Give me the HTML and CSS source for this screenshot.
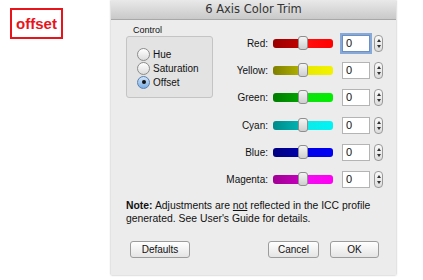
FILE: index.html
```html
<!DOCTYPE html>
<html lang="en">
<head>
    <meta charset="UTF-8">
    <title>6 Axis Color Trim</title>
    <link rel="stylesheet" href="styles.css">
</head>
<body>
    <div class="page">
        <div class="tag">offset</div>
        <div class="window">
            <div class="titlebar">6 Axis Color Trim</div>
            <div class="content">
                <div class="top">
                    <div class="control">
                        <div class="group-label">Control</div>
                        <div class="group-box">
                            <label class="radio"><span class="dot"></span>Hue</label>
                            <label class="radio"><span class="dot"></span>Saturation</label>
                            <label class="radio"><span class="dot on"></span>Offset</label>
                        </div>
                    </div>
                    <div class="rows">
                        <div class="row">
                            <span class="name">Red:</span>
                            <div class="track red"><span class="thumb"></span></div>
                            <div class="field focus">0</div>
                            <span class="stepper"><i class="up"></i><i class="down"></i></span>
                        </div>
                        <div class="row">
                            <span class="name">Yellow:</span>
                            <div class="track yellow"><span class="thumb"></span></div>
                            <div class="field">0</div>
                            <span class="stepper"><i class="up"></i><i class="down"></i></span>
                        </div>
                        <div class="row">
                            <span class="name">Green:</span>
                            <div class="track green"><span class="thumb"></span></div>
                            <div class="field">0</div>
                            <span class="stepper"><i class="up"></i><i class="down"></i></span>
                        </div>
                        <div class="row">
                            <span class="name">Cyan:</span>
                            <div class="track cyan"><span class="thumb"></span></div>
                            <div class="field">0</div>
                            <span class="stepper"><i class="up"></i><i class="down"></i></span>
                        </div>
                        <div class="row">
                            <span class="name">Blue:</span>
                            <div class="track blue"><span class="thumb"></span></div>
                            <div class="field">0</div>
                            <span class="stepper"><i class="up"></i><i class="down"></i></span>
                        </div>
                        <div class="row">
                            <span class="name">Magenta:</span>
                            <div class="track magenta"><span class="thumb"></span></div>
                            <div class="field">0</div>
                            <span class="stepper"><i class="up"></i><i class="down"></i></span>
                        </div>
                    </div>
                </div>
                <p class="note"><b>Note:</b> Adjustments are <u>not</u> reflected in the ICC profile<br>generated. See User's Guide for details.</p>
                <div class="buttons">
                    <button class="btn defaults">Defaults</button>
                    <button class="btn cancel">Cancel</button>
                    <button class="btn ok">OK</button>
                </div>
            </div>
        </div>
    </div>
</body>
</html>
```

FILE: styles.css
```css
body {
    margin: 0;
    background: #fff;
    font-family: "Liberation Sans", sans-serif;
    font-size: 10px;
    color: #111;
}
.page {
    display: flex;
    align-items: flex-start;
    padding: 8px 0 0 10px;
    height: 272px;
}
.tag {
    width: 49px;
    height: 27px;
    border: 2px solid #e8141c;
    color: #e8141c;
    font-weight: bold;
    font-size: 15px;
    display: flex;
    align-items: center;
    justify-content: center;
}
.window {
    margin: -8px 0 0 48px;
    width: 285px;
    height: 275px;
    background: #ececec;
    box-shadow: 0 0 2px rgba(0, 0, 0, 0.35);
    display: flex;
    flex-direction: column;
}
.titlebar {
    height: 19px;
    background: linear-gradient(#e9e9e9, #c9c9c9);
    border-bottom: 1px solid #a8a8a8;
    text-align: center;
    font-family: "DejaVu Sans", sans-serif;
    font-size: 11.5px;
    line-height: 19px;
    color: #333;
}
.content {
    padding: 6px 0 0 15px;
}
.top {
    display: flex;
}
.control {
    width: 87px;
}
.group-label {
    font-size: 9px;
    margin-left: 7px;
    height: 9px;
    line-height: 9px;
}
.group-box {
    margin-top: 1px;
    border: 1px solid #c4c4c4;
    border-radius: 3px;
    background: #e3e3e3;
    padding: 10px 0 0 10px;
    box-sizing: border-box;
    height: 62px;
}
.radio {
    display: flex;
    align-items: center;
    height: 14px;
    font-size: 10px;
}
.dot {
    width: 11px;
    height: 11px;
    border-radius: 50%;
    border: 1px solid #8c8c8c;
    background: linear-gradient(#fff, #dcdcdc);
    margin-right: 3px;
    position: relative;
}
.dot.on {
    border-color: #5a7fb0;
    background: linear-gradient(#d0e4f8, #7aaee6);
}
.dot.on::after {
    content: "";
    position: absolute;
    left: 3.5px;
    top: 3.5px;
    width: 4px;
    height: 4px;
    border-radius: 50%;
    background: #111;
}
.rows {
    margin-top: 4px;
}
.row {
    display: flex;
    align-items: center;
    height: 27.2px;
}
.name {
    width: 55px;
    text-align: right;
    font-size: 10px;
    margin-right: 5px;
}
.track {
    width: 60px;
    height: 9px;
    border-radius: 3px;
    position: relative;
    margin-right: 9px;
}
.thumb {
    position: absolute;
    left: 25px;
    top: -3px;
    width: 10px;
    height: 14px;
    border-radius: 3px;
    border: 1px solid #8e8e8e;
    box-sizing: border-box;
    background: linear-gradient(#f4f4f4, #cfcfcf);
}
.red { background: linear-gradient(to right, #9a0000, #c40000 50%, #ff1010 50%, #ff0000); }
.yellow { background: linear-gradient(to right, #7f7f00, #b5b500 50%, #e8e800 50%, #f2f200); }
.green { background: linear-gradient(to right, #007d00, #00a800 50%, #10e010 50%, #00ee00); }
.cyan { background: linear-gradient(to right, #008a8a, #00b8b8 50%, #10e8e8 50%, #00f4f4); }
.blue { background: linear-gradient(to right, #000080, #0000b0 50%, #0000e8 50%, #0000f4); }
.magenta { background: linear-gradient(to right, #a00094, #c800c0 50%, #f010f0 50%, #ff00f4); }
.field {
    width: 28px;
    height: 17px;
    background: #fff;
    border: 1px solid #b4b4b4;
    box-sizing: border-box;
    font-size: 11px;
    line-height: 15px;
    padding-left: 3px;
}
.field.focus {
    box-shadow: 0 0 0 2px #86a9d8;
    border-color: #6c8fc4;
}
.stepper {
    margin-left: 4px;
    width: 9px;
    height: 17px;
    border: 1px solid #9a9a9a;
    border-radius: 4px;
    box-sizing: border-box;
    background: linear-gradient(#fafafa, #dcdcdc);
    display: flex;
    flex-direction: column;
    align-items: center;
    justify-content: center;
    gap: 3px;
}
.stepper i {
    width: 0;
    height: 0;
    border-left: 2px solid transparent;
    border-right: 2px solid transparent;
}
.stepper .up { border-bottom: 3px solid #333; }
.stepper .down { border-top: 3px solid #333; }
.note {
    margin: 6px 0 0 0;
    font-size: 10.4px;
    line-height: 13px;
    white-space: nowrap;
}
.buttons {
    display: flex;
    margin: 16px 0 0 4px;
}
.btn {
    height: 17px;
    padding: 0;
    font-family: "Liberation Sans", sans-serif;
    font-size: 10px;
    color: #111;
    border: 1px solid #9c9c9c;
    border-radius: 3px;
    background: linear-gradient(#ffffff, #e4e4e4);
}
.defaults { width: 60px; }
.cancel { width: 51px; margin-left: 78px; }
.ok { width: 49px; margin-left: 11px; }
```
